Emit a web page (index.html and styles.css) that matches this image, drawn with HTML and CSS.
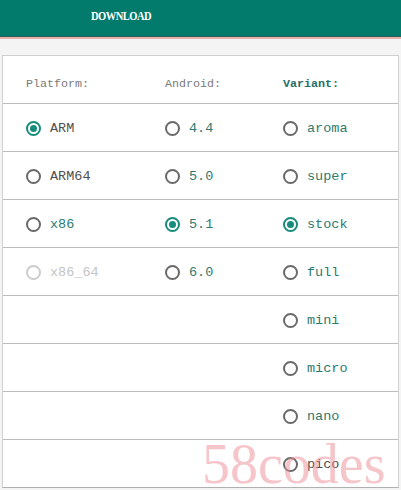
FILE: index.html
```html
<html>
<head>
<link rel="stylesheet" href="styles.css">
</head>
<body>
<div class="topbar">
	<div class="tab"><span>DOWNLOAD</span></div>
</div>
<div class="stripe"></div>

<div class="page">
<div class="card">
	<div class="row head">
		<div class="cell">Platform:</div>
		<div class="cell">Android:</div>
		<div class="cell variant">Variant:</div>
	</div>
	<div class="row">
		<div class="cell"><span class="radio on"></span><span class="dark">ARM</span></div>
		<div class="cell"><span class="radio"></span>4.4</div>
		<div class="cell"><span class="radio"></span>aroma</div>
	</div>
	<div class="row">
		<div class="cell"><span class="radio"></span><span class="dark">ARM64</span></div>
		<div class="cell"><span class="radio"></span>5.0</div>
		<div class="cell"><span class="radio"></span>super</div>
	</div>
	<div class="row">
		<div class="cell"><span class="radio"></span>x86</div>
		<div class="cell"><span class="radio on"></span>5.1</div>
		<div class="cell"><span class="radio on"></span>stock</div>
	</div>
	<div class="row">
		<div class="cell off"><span class="radio"></span>x86_64</div>
		<div class="cell"><span class="radio"></span>6.0</div>
		<div class="cell"><span class="radio"></span>full</div>
	</div>
	<div class="row">
		<div class="cell"></div>
		<div class="cell"></div>
		<div class="cell"><span class="radio"></span>mini</div>
	</div>
	<div class="row">
		<div class="cell"></div>
		<div class="cell"></div>
		<div class="cell"><span class="radio"></span>micro</div>
	</div>
	<div class="row">
		<div class="cell"></div>
		<div class="cell"></div>
		<div class="cell"><span class="radio"></span>nano</div>
	</div>
	<div class="row">
		<div class="cell"></div>
		<div class="cell"></div>
		<div class="cell"><span class="radio"></span><span class="dark">pico</span></div>
	</div>
</div>
</div>

<div class="watermark">58codes</div>
</body>
</html>
```

FILE: styles.css
```css
body
{
margin:0;
background-color:#f4f4f4;
font-family:"Liberation Mono", monospace;
}
.topbar
{
height:36px;
background-color:#027a6c;
border-bottom:1px solid #2f5c52;
}
.tab
{
padding-left:91px;
line-height:32px;
font-family:"Liberation Serif", serif;
font-weight:bold;
font-size:12.5px;
letter-spacing:-0.6px;
color:#ffffff;
}
.tab span
{
display:inline-block;
transform:scaleX(0.84);
transform-origin:left center;
}
.stripe
{
height:2px;
background-color:#e6b0b0;
}
.page
{
padding:16px 2px 0 2px;
}
.card
{
background-color:#ffffff;
border:1px solid #d0d0d0;
border-bottom:1px solid #b0b0b0;
}
.row
{
display:grid;
grid-template-columns:139px 118px 1fr;
height:45px;
padding-top:2px;
padding-left:23px;
border-top:1px solid #bdbdbd;
align-items:center;
}
.row.head
{
border-top:none;
color:#7a7a7a;
padding-top:8px;
height:39px;
}
.head .variant
{
color:#26706a;
font-weight:bold;
}
.cell
{
display:flex;
align-items:center;
font-size:13.5px;
color:#2e7a70;
}
.head .cell
{
font-size:11.7px;
color:#7a7a7a;
}
.head .cell.variant
{
color:#26706a;
}
.dark
{
color:#505050;
}
.off
{
color:#c4c4c4;
}
.radio
{
width:11px;
height:11px;
border:2px solid #6a6a6a;
border-radius:50%;
margin-right:9px;
box-sizing:content-box;
position:relative;
}
.radio.on
{
border-color:#168c7c;
}
.radio.on::after
{
content:"";
position:absolute;
left:2px;
top:2px;
width:7px;
height:7px;
border-radius:50%;
background-color:#168c7c;
}
.off .radio
{
border-color:#cccccc;
}
.watermark
{
position:absolute;
left:202px;
top:432px;
font-family:"Liberation Serif", serif;
font-size:56px;
color:rgba(235,140,150,0.5);
pointer-events:none;
}
```
